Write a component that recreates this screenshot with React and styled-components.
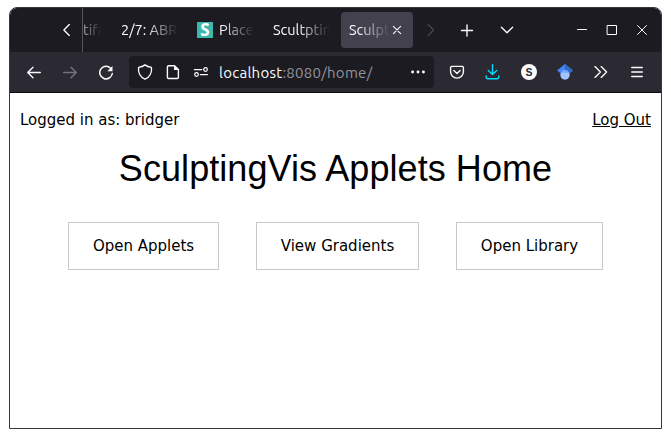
import React from "react";
import styled, { createGlobalStyle } from "styled-components";

const GlobalStyle = createGlobalStyle`
  * { box-sizing: border-box; }
  body { margin: 0; background: #fff; }
`;

const uiFont = `Ubuntu, "Noto Sans", "Open Sans", sans-serif`;

const Window = styled.div`
  display: flex;
  flex-direction: column;
  width: 653px;
  height: 422px;
  margin: 7px 0 0 9px;
  border: 1px solid #38373d;
  border-radius: 8px 8px 0 0;
  overflow: hidden;
  background: #fff;
`;

const TabStrip = styled.div`
  display: flex;
  align-items: center;
  height: 44px;
  flex: none;
  background: #1c1b22;
  color: #fbfbfe;
  font-family: ${uiFont};
  font-size: 14.5px;
`;

const ScrollLeft = styled.div`
  display: flex;
  align-items: center;
  justify-content: flex-end;
  width: 73px;
  height: 44px;
  padding-right: 7px;
  border-right: 1px solid #55545b;
`;

const Tab = styled.div`
  display: flex;
  align-items: center;
  flex: none;
  width: ${(p) => p.$width}px;
  height: 36px;
  padding-left: ${(p) => p.$inset ?? 8}px;
  gap: ${(p) => p.$gap ?? 0}px;
  border-radius: 4px;
  background: ${(p) => (p.$active ? "#42414d" : "transparent")};
`;

const TabLabel = styled.span`
  display: block;
  width: ${(p) => p.$width}px;
  flex: none;
  white-space: nowrap;
  line-height: 22px;
  opacity: ${(p) => p.$strength ?? 1};
  mask-image: linear-gradient(to left, transparent, #000 ${(p) => p.$fade ?? 32}px);
`;

const Favicon = styled.span`
  display: flex;
  align-items: center;
  justify-content: center;
  flex: none;
  width: 16px;
  height: 16px;
  background: #3db8ad;
  color: #fff;
  font: 700 17px/16px "Open Sans", sans-serif;
`;

const Slot = styled.span`
  display: flex;
  align-items: center;
  justify-content: center;
  flex: none;
  width: ${(p) => p.$width ?? 36}px;
  height: 40px;
`;

const WindowControls = styled.div`
  display: flex;
  align-items: center;
  margin-left: auto;
  padding-right: 4px;
`;

const Toolbar = styled.div`
  display: flex;
  align-items: center;
  flex: none;
  height: 41px;
  padding: 0 6px;
  background: #2b2a33;
  border-bottom: 1px solid #0c0c0d;
`;

const AddressBar = styled.div`
  display: flex;
  align-items: center;
  width: 305px;
  height: 32px;
  margin: 0 5px;
  padding-left: 2px;
  border-radius: 4px;
  background: #1c1b22;
`;

const Url = styled.span`
  flex: 1;
  padding: 1px 0 0 4px;
  color: #94939a;
  font: 15px/22px ${uiFont};
  letter-spacing: 0.26px;
  white-space: nowrap;
`;

const Host = styled.span`
  color: #fbfbfe;
`;

const ExtensionBadge = styled.span`
  display: flex;
  align-items: center;
  justify-content: center;
  width: 16px;
  height: 16px;
  border-radius: 50%;
  background: #fbfbfe;
  color: #2b2a33;
  font: 700 10.5px/16px "Liberation Sans", sans-serif;
`;

const Page = styled.main`
  flex: 1;
  padding: 17px 10px;
  color: #000;
  font: 15px/20px "DejaVu Sans", sans-serif;
`;

const Account = styled.div`
  display: flex;
  justify-content: space-between;
`;

const LogOut = styled.a`
  color: #000;
  text-decoration: underline;
`;

const Title = styled.h1`
  margin: 18px 0 32px;
  text-align: center;
  font: 400 36px/42px "Liberation Sans", Arial, sans-serif;
  letter-spacing: 0.07px;
`;

const Actions = styled.div`
  display: flex;
  justify-content: center;
  gap: 37px;
`;

const Action = styled.button`
  width: ${(p) => p.$width}px;
  height: 48px;
  padding: 0;
  border: 1px solid #c8c8c8;
  background: #fff;
  color: #000;
  font: 15px/20px "DejaVu Sans", sans-serif;
`;

const Glyph = styled.svg`
  display: block;
  flex: none;
  fill: none;
  stroke: ${(p) => p.$color ?? "#fbfbfe"};
  stroke-width: ${(p) => p.$weight ?? 1.35};
  stroke-linecap: round;
  stroke-linejoin: round;
`;

const Icon = ({ children, size = 16, ...rest }) => (
  <Glyph width={size} height={size} viewBox={`0 0 ${size} ${size}`} {...rest}>
    {children}
  </Glyph>
);

const actions = [
  { label: "Open Applets", width: 151 },
  { label: "View Gradients", width: 163 },
  { label: "Open Library", width: 147 },
];

export default function App() {
  return (
    <>
      <GlobalStyle />
      <Window>
        <TabStrip>
          <ScrollLeft>
            <Icon><path d="M10.3 2.6 4.9 8l5.4 5.4" /></Icon>
          </ScrollLeft>
          <Tab $width={30} $inset={0}>
            <TabLabel $width={19} $fade={21} $strength={0.65}>tifa</TabLabel>
          </Tab>
          <Tab $width={76}>
            <TabLabel $width={57}>2/7: ABR</TabLabel>
          </Tab>
          <Tab $width={76} $gap={6}>
            <Favicon>S</Favicon>
            <TabLabel $width={35}>Place</TabLabel>
          </Tab>
          <Tab $width={76}>
            <TabLabel $width={57}>Scultptin</TabLabel>
          </Tab>
          <Tab $width={72} $active>
            <TabLabel $width={41}>Sculpt</TabLabel>
            <Icon size={14} $weight={1.1}><path d="m3.4 3.4 7.2 7.2m0-7.2-7.2 7.2" /></Icon>
          </Tab>
          <Slot $width={35}>
            <Icon $color="#47464e"><path d="m5.2 2.6 5.4 5.4-5.4 5.4" /></Icon>
          </Slot>
          <Slot $width={37}>
            <Icon $weight={1.4}><path d="M8 3v11M2.5 8.5h11" /></Icon>
          </Slot>
          <Slot $width={44}>
            <Icon><path d="m2.4 5.2 5.6 5.5 5.6-5.5" /></Icon>
          </Slot>
          <WindowControls>
            <Slot $width={30}>
              <Icon $weight={1}><path d="M3.5 7.5h9" /></Icon>
            </Slot>
            <Slot $width={30}>
              <Icon $weight={1}><path d="M3.5 3.5h9v9h-9z" strokeLinejoin="miter" /></Icon>
            </Slot>
            <Slot $width={30}>
              <Icon $weight={1}><path d="m3.5 3.5 9 9m0-9-9 9" /></Icon>
            </Slot>
          </WindowControls>
        </TabStrip>

        <Toolbar>
          <Slot>
            <Icon><path d="M14.3 8.5H1.7M7 3.2 1.7 8.5 7 13.8" /></Icon>
          </Slot>
          <Slot>
            <Icon $color="#75747c"><path d="M1.7 8.5h12.6M9 3.2l5.3 5.3L9 13.8" /></Icon>
          </Slot>
          <Slot>
            <Icon $weight={1.5}>
              <path d="M12.6 4.2A6.3 6.3 0 1 0 14.3 9.5" />
              <path d="M14.5 2.1v5.2H9.3z" fill="#fbfbfe" stroke="none" />
            </Icon>
          </Slot>
          <AddressBar>
            <Slot $width={28}>
              <Icon $weight={1.4}>
                <path d="M8 .9c2 1.6 4 2.2 6.4 2.5.8 5-1.7 9.7-6.4 11.8C3.3 13.1.8 8.4 1.6 3.4 4 3.1 6 2.5 8 .9z" />
              </Icon>
            </Slot>
            <Slot $width={28}>
              <Icon $weight={1.4}>
                <path d="M3.6 1.7h5.9l3.9 3.9v7.7c0 .8-.4 1.2-1.2 1.2H3.6c-.8 0-1.2-.4-1.2-1.2V2.9c0-.8.4-1.2 1.2-1.2z" />
                <path d="M9 1.5v4.6h4.4z" fill="#fbfbfe" stroke="none" />
              </Icon>
            </Slot>
            <Slot $width={28}>
              <Icon $weight={1.25}>
                <path d="M1.4 5.6h7.4M7.4 10.6h7" />
                <circle cx="12.5" cy="5.5" r="1.8" />
                <circle cx="3.5" cy="10.5" r="1.8" />
              </Icon>
            </Slot>
            <Url><Host>localhost</Host>:8080/home/</Url>
            <Slot $width={32}>
              <Icon>
                <g fill="#fbfbfe" stroke="none">
                  <circle cx="2.6" cy="8" r="1.45" />
                  <circle cx="8" cy="8" r="1.45" />
                  <circle cx="13.4" cy="8" r="1.45" />
                </g>
              </Icon>
            </Slot>
          </AddressBar>
          <Slot>
            <Icon $weight={1.4}>
              <path d="M2.8 2.4h10.4c.7 0 1.2.5 1.2 1.2v4.1a6.4 6.4 0 0 1-12.8 0V3.6c0-.7.5-1.2 1.2-1.2z" />
              <path d="M4.9 6.5 8 9.4l3.1-2.9" />
            </Icon>
          </Slot>
          <Slot>
            <Icon $color="#00ddff" $weight={1.4}>
              <path d="M7.5.8v9.4M3.3 6.4l4.2 4 4.2-4M1.2 12v1.3c0 .8.6 1.4 1.4 1.4h9.8c.8 0 1.4-.6 1.4-1.4V12" />
            </Icon>
          </Slot>
          <Slot><ExtensionBadge>S</ExtensionBadge></Slot>
          <Slot>
            <Icon>
              <g stroke="none">
                <path d="M8 0 0 6.4l4.2 3.4h7.6L16 6.4z" fill="#4285f4" />
                <path d="M8 0v7l4 3 4-3.6z" fill="#3367c0" />
                <circle cx="8" cy="11" r="4.7" fill="#a0c3ff" />
                <path d="M3.8 8.7a4.7 4.7 0 0 1 8.4 0z" fill="#76a7fa" />
              </g>
            </Icon>
          </Slot>
          <Slot>
            <Icon><path d="m2 2.6 5.4 5.4L2 13.4M8.2 2.6l5.4 5.4-5.4 5.4" /></Icon>
          </Slot>
          <Slot>
            <Icon $weight={1.3}><path d="M2.7 3.5h10.6M2.7 8h10.6M2.7 12.5h10.6" /></Icon>
          </Slot>
        </Toolbar>

        <Page>
          <Account>
            <span>Logged in as: bridger</span>
            <LogOut>Log Out</LogOut>
          </Account>
          <Title>SculptingVis Applets Home</Title>
          <Actions>
            {actions.map((a) => (
              <Action key={a.label} $width={a.width}>{a.label}</Action>
            ))}
          </Actions>
        </Page>
      </Window>
    </>
  );
}
